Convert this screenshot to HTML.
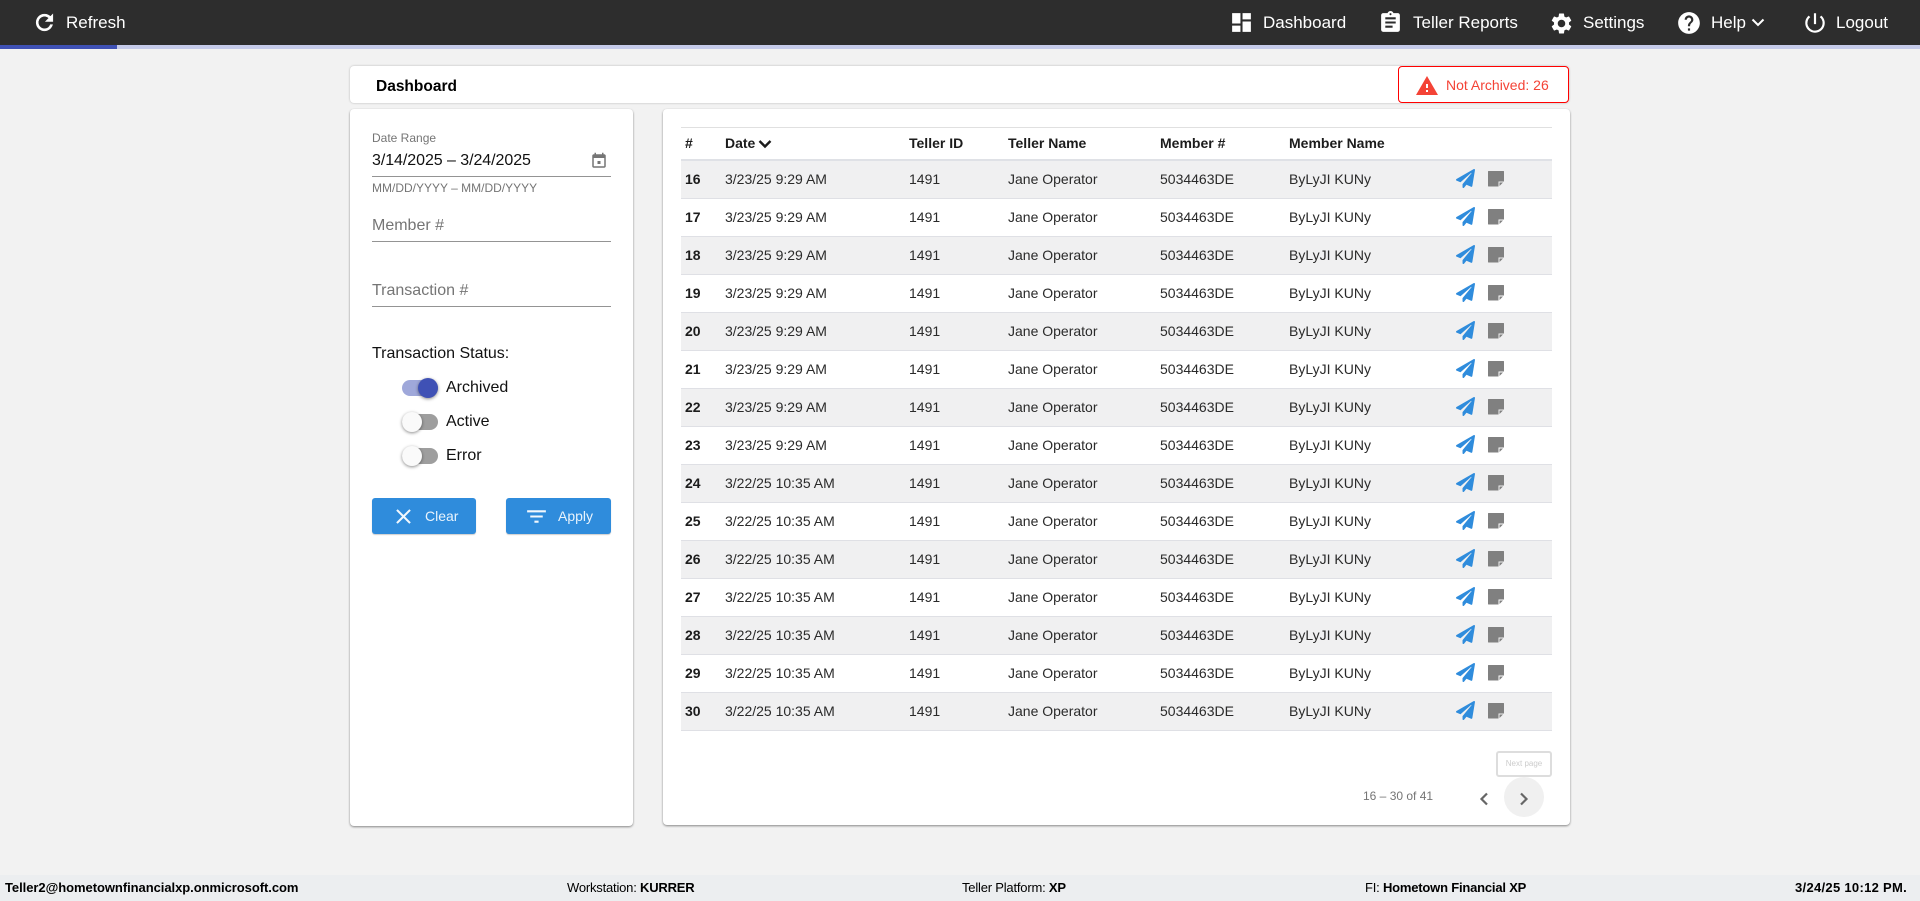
<!DOCTYPE html>
<html lang="en">
<head>
<meta charset="utf-8">
<title>Dashboard</title>
<style>
html,body{margin:0;padding:0;width:1920px;height:901px;overflow:hidden;background:#f2f2f2;font-family:"Liberation Sans",Arial,sans-serif;color:#212121}
.a{position:absolute;white-space:nowrap}
svg{position:absolute;display:block}
.nav{color:#fff;font-size:17px;top:12px;line-height:22px}
.card{position:absolute;background:#fff;border-radius:4px;box-shadow:0 1px 2px rgba(0,0,0,.45)}
.line{position:absolute;left:372px;width:239px;height:1px;background:#949494}
.ph{color:#757575;font-size:16px;left:372px;line-height:20px}
.lb{font-size:16px;left:446px;line-height:20px;color:#111}
.track{position:absolute;left:402px;width:36px;height:16px;border-radius:8px;background:#9e9e9e}
.thumb{position:absolute;width:20px;height:20px;border-radius:50%;background:#fafafa;box-shadow:0 1px 3px rgba(0,0,0,.45)}
.btn{position:absolute;top:498px;height:36px;background:#2f8cdc;border-radius:3px;box-shadow:0 1px 1px rgba(0,0,0,.2);color:#e8f3fc;font-size:14px;line-height:36px}
.row{position:absolute;left:681px;width:871px;height:37px;border-bottom:1px solid #dfe0e5;font-size:14px;line-height:37px;color:#2a2a2a}
.row.o{background:#f0f0f1}
.row span,.hd span{position:absolute;top:0;white-space:nowrap}
.row b{position:absolute;left:4px;top:0;color:#1c1c1c}
.c2{left:44px}.c3{left:228px}.c4{left:327px}.c5{left:479px}.c6{left:608px}
.pl{left:775px;top:8px}.nt{left:807px;top:10px}
.hd{position:absolute;left:681px;width:871px;top:128px;height:31px;font-size:14px;font-weight:bold;line-height:31px;color:#1c1c1c}
.ft{position:absolute;top:875px;left:0;width:1920px;height:26px;background:#eceef0}
.ft .a{font-size:13px;line-height:26px;color:#000;top:0;letter-spacing:-.2px}
</style>
</head>
<body>
<svg width="0" height="0" style="position:absolute">
<defs>
<symbol id="plane" viewBox="0 0 512 512"><path fill="#2f8cdc" d="M476 3.2L12.5 270.6c-18.1 10.4-15.8 35.6 2.2 43.2L121 358.4l287.3-253.2c5.500-4.9 13.3 2.6 8.6 8.3L176 407v80.5c0 23.6 28.5 32.9 42.5 15.8L282 426l124.6 52.2c14.2 6 30.4-2.9 33-18.2l72-432C515 7.8 493.3-6.8 476 3.2z"/></symbol>
<symbol id="note" viewBox="0 0 16 16"><path fill="#808080" d="M.5 0h15a.5.500 0 0 1 .5.500v10h-5.500V15.500H.5a.5.500 0 0 1-.5-.5V.5A.5.500 0 0 1 .5 0z"/><path fill="#808080" d="M11.500 11.500h3.500l-3.500 3.500z"/></symbol>
</defs>
</svg>

<!-- top bar -->
<div class="a" style="left:0;top:0;width:1920px;height:45px;background:#2d2d2d"></div>
<div class="a" style="left:0;top:45px;width:1920px;height:4px;background:#c5cae9"></div>
<div class="a" style="left:0;top:45px;width:117px;height:4px;background:#3f51b5"></div>

<svg style="left:32px;top:10px" width="25" height="25" viewBox="0 0 24 24"><path fill="#fff" stroke="#fff" stroke-width=".5" d="M17.65 6.35A7.958 7.958 0 0 0 12 4c-4.42 0-7.99 3.58-7.99 8s3.57 8 7.99 8c3.73 0 6.84-2.55 7.73-6h-2.08A5.99 5.99 0 0 1 12 18c-3.31 0-6-2.69-6-6s2.69-6 6-6c1.66 0 3.14.69 4.22 1.78L13 11h7V4l-2.35 2.35z"/></svg>
<div class="a nav" style="left:66px">Refresh</div>

<svg style="left:1229px;top:10px" width="25" height="25" viewBox="0 0 24 24"><path fill="#fff" d="M3 13h8V3H3v10zm0 8h8v-6H3v6zm10 0h8V11h-8v10zm0-18v6h8V3h-8z"/></svg>
<div class="a nav" style="left:1263px">Dashboard</div>
<svg style="left:1378px;top:10px" width="25" height="25" viewBox="0 0 24 24"><path fill="#fff" d="M19 3h-4.18C14.4 1.84 13.3 1 12 1c-1.3 0-2.4.84-2.82 2H5c-1.1 0-2 .9-2 2v14c0 1.1.9 2 2 2h14c1.1 0 2-.9 2-2V5c0-1.1-.9-2-2-2zm-7 0c.55 0 1 .45 1 1s-.45 1-1 1-1-.45-1-1 .45-1 1-1zm2 14H7v-2h7v2zm3-4H7v-2h10v2zm0-4H7V7h10v2z"/></svg>
<div class="a nav" style="left:1413px">Teller Reports</div>
<svg style="left:1549px;top:11px" width="25" height="25" viewBox="0 0 24 24"><path fill="#fff" d="M19.14 12.94c.04-.3.06-.61.06-.94 0-.32-.02-.64-.07-.94l2.03-1.58a.49.49 0 0 0 .12-.61l-1.92-3.32a.488.488 0 0 0-.59-.22l-2.39.96c-.5-.38-1.03-.7-1.62-.94l-.36-2.54a.484.484 0 0 0-.48-.41h-3.84c-.24 0-.43.17-.47.41l-.36 2.54c-.59.24-1.13.57-1.62.94l-2.39-.96c-.22-.08-.47 0-.59.22L2.74 8.87c-.12.21-.08.47.12.61l2.03 1.58c-.05.3-.09.63-.09.94s.02.64.07.94l-2.03 1.58a.49.49 0 0 0-.12.61l1.92 3.32c.12.22.37.29.59.22l2.39-.96c.5.38 1.03.7 1.62.94l.36 2.54c.05.24.24.41.48.41h3.84c.24 0 .44-.17.47-.41l.36-2.54c.59-.24 1.13-.56 1.62-.94l2.39.96c.22.08.47 0 .59-.22l1.92-3.32c.12-.22.07-.47-.12-.61l-2.01-1.58zM12 15.6c-1.98 0-3.6-1.62-3.6-3.6s1.62-3.6 3.6-3.6 3.6 1.62 3.6 3.6-1.62 3.6-3.6 3.6z"/></svg>
<div class="a nav" style="left:1583px">Settings</div>
<svg style="left:1676px;top:10px" width="26" height="26" viewBox="0 0 24 24"><path fill="#fff" d="M12 2C6.48 2 2 6.48 2 12s4.48 10 10 10 10-4.48 10-10S17.52 2 12 2zm1 17h-2v-2h2v2zm2.07-7.75l-.9.92C13.45 12.9 13 13.5 13 15h-2v-.5c0-1.1.45-2.1 1.17-2.83l1.24-1.26c.37-.36.59-.86.59-1.41 0-1.1-.9-2-2-2s-2 .9-2 2H8c0-2.21 1.79-4 4-4s4 1.79 4 4c0 .88-.36 1.68-.93 2.25z"/></svg>
<div class="a nav" style="left:1711px">Help</div>
<svg style="left:1750px;top:14px" width="16" height="16" viewBox="0 0 16 16"><path fill="none" stroke="#fff" stroke-width="2" d="M2.500 5.500L8 11l5.500-5.500"/></svg>
<svg style="left:1802px;top:10px" width="26" height="26" viewBox="0 0 24 24"><path fill="#fff" d="M13 3h-2v10h2V3zm4.83 2.17l-1.42 1.42A6.92 6.92 0 0 1 19 12c0 3.87-3.13 7-7 7A6.995 6.995 0 0 1 7.58 6.58L6.17 5.17A8.932 8.932 0 0 0 3 12a9 9 0 0 0 18 0c0-2.74-1.23-5.18-3.17-6.83z"/></svg>
<div class="a nav" style="left:1836px">Logout</div>

<!-- title card -->
<div class="card" style="left:350px;top:66px;width:1219px;height:37px;box-shadow:0 0 2px rgba(0,0,0,.25)"></div>
<div class="a" style="left:376px;top:77px;font-size:15.5px;font-weight:bold;line-height:20px;color:#000">Dashboard</div>
<div class="a" style="left:1398px;top:66px;width:169px;height:35px;border:1px solid #f00;border-radius:4px;background:#fff"></div>
<svg style="left:1415px;top:74px" width="24" height="24" viewBox="0 0 24 24"><path fill="#f44336" d="M1 21h22L12 2 1 21zm12-3h-2v-2h2v2zm0-4h-2v-4h2v4z"/></svg>
<div class="a" style="left:1446px;top:75px;font-size:14px;line-height:20px;color:#f44336">Not Archived: 26</div>

<!-- left card -->
<div class="card" style="left:350px;top:109px;width:283px;height:717px"></div>
<div class="a" style="left:372px;top:131px;font-size:12px;line-height:14px;color:#757575">Date Range</div>
<div class="a" style="left:372px;top:151px;font-size:16px;line-height:20px;color:#111;letter-spacing:-.06px">3/14/2025 – 3/24/2025</div>
<svg style="left:590px;top:152px" width="18" height="18" viewBox="0 0 24 24"><path fill="#757575" d="M14 12h-4v4h4v-4zM16 1v2H8V1H6v2H5c-1.11 0-1.99.9-1.99 2L3 19c0 1.1.89 2 2 2h14c1.1 0 2-.9 2-2V5c0-1.1-.9-2-2-2h-1V1h-2zm3 18H5V8h14v11z"/></svg>
<div class="line" style="top:176px"></div>
<div class="a" style="left:372px;top:181px;font-size:12px;line-height:14px;color:#757575">MM/DD/YYYY – MM/DD/YYYY</div>
<div class="a ph" style="top:216px">Member #</div>
<div class="line" style="top:241px"></div>
<div class="a ph" style="top:281px">Transaction #</div>
<div class="line" style="top:306px"></div>
<div class="a" style="left:372px;top:344px;font-size:16px;line-height:20px;color:#111">Transaction Status:</div>

<div class="track" style="top:380px;background:#9fa8da"></div>
<div class="thumb" style="left:418px;top:378px;background:#3f51b5"></div>
<div class="a lb" style="top:378px">Archived</div>
<div class="track" style="top:414px"></div>
<div class="thumb" style="left:402px;top:412px"></div>
<div class="a lb" style="top:412px">Active</div>
<div class="track" style="top:448px"></div>
<div class="thumb" style="left:402px;top:446px"></div>
<div class="a lb" style="top:446px">Error</div>

<div class="btn" style="left:372px;width:104px">
<svg style="left:19px;top:6px" width="25" height="25" viewBox="0 0 24 24"><path fill="#f2f8fd" d="M19 6.41L17.59 5 12 10.59 6.41 5 5 6.41 10.59 12 5 17.59 6.41 19 12 13.41 17.59 19 19 17.59 13.41 12z"/></svg>
<span class="a" style="left:53px;top:0">Clear</span></div>
<div class="btn" style="left:506px;width:105px">
<svg style="left:18px;top:6px" width="25" height="25" viewBox="0 0 24 24"><path fill="#f2f8fd" d="M10 18h4v-2h-4v2zM3 6v2h18V6H3zm3 7h12v-2H6v2z"/></svg>
<span class="a" style="left:52px;top:0">Apply</span></div>

<!-- right card -->
<div class="card" style="left:663px;top:109px;width:907px;height:716px"></div>
<div class="a" style="left:681px;top:127px;width:871px;height:1px;background:#e0e0e0"></div>
<div class="hd">
<span style="left:4px">#</span><span class="c2">Date</span>
<svg style="left:77px;top:9px" width="14" height="14" viewBox="0 0 14 14"><path fill="none" stroke="#1c1c1c" stroke-width="2.4" d="M1.500 4L7 9.500 12.500 4"/></svg>
<span class="c3">Teller ID</span><span class="c4">Teller Name</span><span class="c5">Member #</span><span class="c6">Member Name</span>
</div>
<div class="a" style="left:681px;top:159px;width:871px;height:2px;background:#dfe1e6"></div>

<div class="row o" style="top:161px"><b>16</b><span class="c2">3/23/25 9:29 AM</span><span class="c3">1491</span><span class="c4">Jane Operator</span><span class="c5">5034463DE</span><span class="c6">ByLyJI KUNy</span><svg class="pl" width="19" height="19"><use href="#plane"/></svg><svg class="nt" width="16" height="16"><use href="#note"/></svg></div>
<div class="row" style="top:199px"><b>17</b><span class="c2">3/23/25 9:29 AM</span><span class="c3">1491</span><span class="c4">Jane Operator</span><span class="c5">5034463DE</span><span class="c6">ByLyJI KUNy</span><svg class="pl" width="19" height="19"><use href="#plane"/></svg><svg class="nt" width="16" height="16"><use href="#note"/></svg></div>
<div class="row o" style="top:237px"><b>18</b><span class="c2">3/23/25 9:29 AM</span><span class="c3">1491</span><span class="c4">Jane Operator</span><span class="c5">5034463DE</span><span class="c6">ByLyJI KUNy</span><svg class="pl" width="19" height="19"><use href="#plane"/></svg><svg class="nt" width="16" height="16"><use href="#note"/></svg></div>
<div class="row" style="top:275px"><b>19</b><span class="c2">3/23/25 9:29 AM</span><span class="c3">1491</span><span class="c4">Jane Operator</span><span class="c5">5034463DE</span><span class="c6">ByLyJI KUNy</span><svg class="pl" width="19" height="19"><use href="#plane"/></svg><svg class="nt" width="16" height="16"><use href="#note"/></svg></div>
<div class="row o" style="top:313px"><b>20</b><span class="c2">3/23/25 9:29 AM</span><span class="c3">1491</span><span class="c4">Jane Operator</span><span class="c5">5034463DE</span><span class="c6">ByLyJI KUNy</span><svg class="pl" width="19" height="19"><use href="#plane"/></svg><svg class="nt" width="16" height="16"><use href="#note"/></svg></div>
<div class="row" style="top:351px"><b>21</b><span class="c2">3/23/25 9:29 AM</span><span class="c3">1491</span><span class="c4">Jane Operator</span><span class="c5">5034463DE</span><span class="c6">ByLyJI KUNy</span><svg class="pl" width="19" height="19"><use href="#plane"/></svg><svg class="nt" width="16" height="16"><use href="#note"/></svg></div>
<div class="row o" style="top:389px"><b>22</b><span class="c2">3/23/25 9:29 AM</span><span class="c3">1491</span><span class="c4">Jane Operator</span><span class="c5">5034463DE</span><span class="c6">ByLyJI KUNy</span><svg class="pl" width="19" height="19"><use href="#plane"/></svg><svg class="nt" width="16" height="16"><use href="#note"/></svg></div>
<div class="row" style="top:427px"><b>23</b><span class="c2">3/23/25 9:29 AM</span><span class="c3">1491</span><span class="c4">Jane Operator</span><span class="c5">5034463DE</span><span class="c6">ByLyJI KUNy</span><svg class="pl" width="19" height="19"><use href="#plane"/></svg><svg class="nt" width="16" height="16"><use href="#note"/></svg></div>
<div class="row o" style="top:465px"><b>24</b><span class="c2">3/22/25 10:35 AM</span><span class="c3">1491</span><span class="c4">Jane Operator</span><span class="c5">5034463DE</span><span class="c6">ByLyJI KUNy</span><svg class="pl" width="19" height="19"><use href="#plane"/></svg><svg class="nt" width="16" height="16"><use href="#note"/></svg></div>
<div class="row" style="top:503px"><b>25</b><span class="c2">3/22/25 10:35 AM</span><span class="c3">1491</span><span class="c4">Jane Operator</span><span class="c5">5034463DE</span><span class="c6">ByLyJI KUNy</span><svg class="pl" width="19" height="19"><use href="#plane"/></svg><svg class="nt" width="16" height="16"><use href="#note"/></svg></div>
<div class="row o" style="top:541px"><b>26</b><span class="c2">3/22/25 10:35 AM</span><span class="c3">1491</span><span class="c4">Jane Operator</span><span class="c5">5034463DE</span><span class="c6">ByLyJI KUNy</span><svg class="pl" width="19" height="19"><use href="#plane"/></svg><svg class="nt" width="16" height="16"><use href="#note"/></svg></div>
<div class="row" style="top:579px"><b>27</b><span class="c2">3/22/25 10:35 AM</span><span class="c3">1491</span><span class="c4">Jane Operator</span><span class="c5">5034463DE</span><span class="c6">ByLyJI KUNy</span><svg class="pl" width="19" height="19"><use href="#plane"/></svg><svg class="nt" width="16" height="16"><use href="#note"/></svg></div>
<div class="row o" style="top:617px"><b>28</b><span class="c2">3/22/25 10:35 AM</span><span class="c3">1491</span><span class="c4">Jane Operator</span><span class="c5">5034463DE</span><span class="c6">ByLyJI KUNy</span><svg class="pl" width="19" height="19"><use href="#plane"/></svg><svg class="nt" width="16" height="16"><use href="#note"/></svg></div>
<div class="row" style="top:655px"><b>29</b><span class="c2">3/22/25 10:35 AM</span><span class="c3">1491</span><span class="c4">Jane Operator</span><span class="c5">5034463DE</span><span class="c6">ByLyJI KUNy</span><svg class="pl" width="19" height="19"><use href="#plane"/></svg><svg class="nt" width="16" height="16"><use href="#note"/></svg></div>
<div class="row o" style="top:693px"><b>30</b><span class="c2">3/22/25 10:35 AM</span><span class="c3">1491</span><span class="c4">Jane Operator</span><span class="c5">5034463DE</span><span class="c6">ByLyJI KUNy</span><svg class="pl" width="19" height="19"><use href="#plane"/></svg><svg class="nt" width="16" height="16"><use href="#note"/></svg></div>

<!-- paginator -->
<div class="a" style="left:1496px;top:751px;width:52px;height:22px;border:2px solid #ddd;border-radius:3px;font-size:8px;line-height:22px;text-align:center;color:#ccc;background:#fff">Next page</div>
<div class="a" style="left:1363px;top:789px;font-size:12px;line-height:14px;color:#757575">16 – 30 of 41</div>
<svg style="left:1472px;top:787px" width="24" height="24" viewBox="0 0 24 24"><path fill="none" stroke="#666" stroke-width="2.2" d="M15 6.500L9.500 12l5.500 5.500"/></svg>
<div class="a" style="left:1504px;top:777px;width:40px;height:40px;border-radius:50%;background:#f0f0f0"></div>
<svg style="left:1512px;top:787px" width="24" height="24" viewBox="0 0 24 24"><path fill="none" stroke="#666" stroke-width="2.2" d="M9 6.500l5.500 5.500L9 17.500"/></svg>

<!-- footer -->
<div class="ft">
<div class="a" style="left:5px;font-weight:bold;letter-spacing:-.05px">Teller2@hometownfinancialxp.onmicrosoft.com</div>
<div class="a" style="left:567px">Workstation: <b>KURRER</b></div>
<div class="a" style="left:962px">Teller Platform: <b>XP</b></div>
<div class="a" style="left:1365px">FI: <b>Hometown Financial XP</b></div>
<div class="a" style="left:1795px;font-weight:bold;letter-spacing:.3px">3/24/25 10:12 PM.</div>
</div>
</body>
</html>
